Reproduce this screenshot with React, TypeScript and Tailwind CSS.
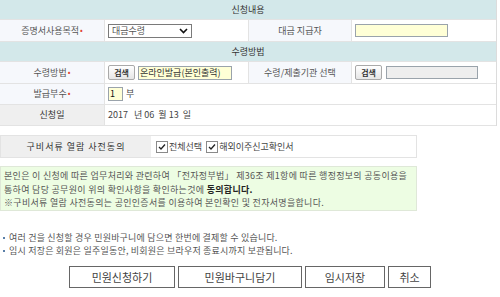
import React from "react";

const font = { fontFamily: '"Noto Sans CJK KR", "Noto Sans", sans-serif' };

function Req() {
  return <span className="text-[#e0432f] text-[8px] ml-[1px] relative -top-[1px]">•</span>;
}

function SearchBtn() {
  return (
    <button className="h-[15px] w-[27px] rounded-[2px] border border-[#a9a9a9] bg-gradient-to-b from-white to-[#e6e6e6] text-[8px] font-bold text-[#333] leading-none">
      검색
    </button>
  );
}

function Check({ label }: { label: string }) {
  return (
    <label className="flex items-center gap-[1px]">
      <span className="w-[12px] h-[12px] border border-[#8a8a8a] bg-white flex items-center justify-center">
        <svg width="8" height="8" viewBox="0 0 8 8">
          <path d="M1 4 L3 6 L7 1.5" stroke="#222" strokeWidth="1.3" fill="none" />
        </svg>
      </span>
      <span>{label}</span>
    </label>
  );
}

export default function App() {
  const label = "bg-[#f6f8fc] flex items-center justify-center border-r border-[#e3e3e3] text-[#555]";
  const cell = "flex items-center px-[3px]";
  return (
    <div style={font} className="w-[500px] h-[297px] bg-white text-[9px] text-[#444] overflow-hidden">
      {/* 신청내용 table */}
      <div className="w-[497px] border-r border-[#dcdcdc]">
        <div className="h-[20px] bg-[#d3e8ea] flex items-center justify-center text-[#333] border-b border-[#e3e3e3]">
          신청내용
        </div>
        <div className="grid grid-cols-[105px_143px_104px_1fr] h-[22px] border-b border-[#e3e3e3]">
          <div className={label}>
            증명서사용목적<Req />
          </div>
          <div className={cell}>
            <div className="w-[84px] h-[14px] border border-[#7a7a7a] bg-white flex items-center justify-between px-[3px] text-[#555]">
              <span>대금수령</span>
              <svg width="9" height="6" viewBox="0 0 9 6">
                <path d="M1 1 L4.5 4.5 L8 1" stroke="#111" strokeWidth="1.6" fill="none" />
              </svg>
            </div>
          </div>
          <div className={label + " border-l"}>대금 지급자</div>
          <div className={cell}>
            <div className="w-[93px] h-[13px] border border-[#9aa3ab] bg-[#ffffd6]" />
          </div>
        </div>
        <div className="h-[20px] bg-[#d3e8ea] flex items-center justify-center text-[#333] border-b border-[#e3e3e3]">
          수령방법
        </div>
        <div className="grid grid-cols-[105px_143px_104px_1fr] h-[22px] border-b border-[#e3e3e3]">
          <div className={label}>
            수령방법<Req />
          </div>
          <div className={cell + " gap-[3px]"}>
            <SearchBtn />
            <div className="w-[94px] h-[14px] border border-[#9aa3ab] bg-[#ffffd6] flex items-center px-[1px] text-[#333]">
              온라인발급(본인출력)
            </div>
          </div>
          <div className={label + " border-l"}>수령/제출기관 선택</div>
          <div className={cell + " gap-[4px]"}>
            <SearchBtn />
            <div className="w-[92px] h-[13px] border border-[#9aa3ab] bg-[#eeeeee]" />
          </div>
        </div>
        <div className="grid grid-cols-[105px_1fr] h-[21px] border-b border-[#e3e3e3]">
          <div className={label}>
            발급부수<Req />
          </div>
          <div className={cell + " gap-[3px]"}>
            <div className="w-[15px] h-[14px] border border-[#9aa3ab] bg-[#ffffd6] flex items-center px-[1px] text-[#111]">1</div>
            <span>부</span>
          </div>
        </div>
        <div className="grid grid-cols-[105px_1fr] h-[21px] border-b border-[#e3e3e3]">
          <div className="bg-[#efefef] flex items-center justify-center border-r border-[#e3e3e3] text-[#333]">신청일</div>
          <div className={cell + " text-[#444]"}>2017&nbsp;&nbsp; 년 06 &nbsp;월 13 &nbsp;일</div>
        </div>
      </div>

      {/* 구비서류 */}
      <div className="mt-[9px] w-[417px] h-[23px] grid grid-cols-[150px_1fr] border border-[#e3e3e3]">
        <div className="bg-[#efefef] flex items-center justify-center text-[#333] tracking-[1px]">구비서류 열람 사전동의</div>
        <div className="flex items-center gap-[4px] pl-[5px]">
          <Check label="전체선택" />
          <Check label="해외이주신고확인서" />
        </div>
      </div>

      {/* notice */}
      <div className="mt-[8px] w-[417px] h-[45px] bg-[#edfde3] border border-[#dfe8d8] px-[3px] pt-[2px] leading-[13.5px] text-[#555] tracking-[0.3px]">
        <p>본인은 이 신청에 따른 업무처리와 관련하여 「전자정부법」 제36조 제1항에 따른 행정정보의 공동이용을</p>
        <p>
          통하여 담당 공무원이 위의 확인사항을 확인하는것에 <b className="text-[#222]">동의합니다.</b>
        </p>
        <p>※구비서류 열람 사전동의는 공인인증서를 이용하여 본인확인 및 전자서명을합니다.</p>
      </div>

      {/* bullets */}
      <div className="mt-[20px] pl-[3px] leading-[13px] text-[#555] tracking-[0.2px]">
        <p className="flex items-center">
          <span className="w-[2px] h-[2px] bg-[#5a7fa8] mr-[4px]" />여러 건을 신청할 경우 민원바구니에 담으면 한번에 결제할 수 있습니다.
        </p>
        <p className="flex items-center">
          <span className="w-[2px] h-[2px] bg-[#5a7fa8] mr-[4px]" />임시 저장은 회원은 일주일동안, 비회원은 브라우저 종료시까지 보관됩니다.
        </p>
      </div>

      {/* buttons */}
      <div className="mt-[9px] flex pl-[69px] gap-[3px] text-[11px] text-[#444]">
        <button className="w-[106px] h-[22px] border border-[#666] bg-white">민원신청하기</button>
        <button className="w-[124px] h-[22px] border border-[#666] bg-white">민원바구니담기</button>
        <button className="w-[80px] h-[22px] border border-[#666] bg-white">임시저장</button>
        <button className="w-[43px] h-[22px] border border-[#666] bg-white">취소</button>
      </div>
    </div>
  );
}
